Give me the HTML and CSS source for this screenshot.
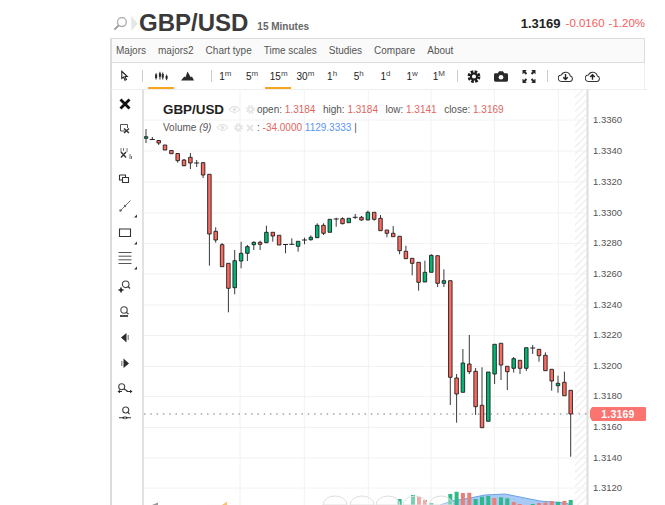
FILE: index.html
```html
<!DOCTYPE html>
<html lang="en">
<head>
<meta charset="utf-8">
<title>GBP/USD 15 Minutes</title>
<link rel="stylesheet" href="styles.css">
</head>
<body>
<div class="page">
  <header class="quote">
    <svg class="search" viewBox="0 0 16 16"><circle cx="9.5" cy="6.5" r="4.7"/><path class="search-handle" d="M6 10l-4.5 4.5"/></svg>
    <svg class="chev" viewBox="0 0 7 16"><path d="M0 0l7 8-7 8z"/></svg>
    <h1 class="symbol">GBP/USD</h1>
    <span class="period">15 Minutes</span>
    <span class="last">1.3169</span>
    <span class="delta">-0.0160</span>
    <span class="delta delta-pct">-1.20%</span>
  </header>

  <div class="widget">
    <nav class="menu">
      <span class="menu-item">Majors</span>
      <span class="menu-item">majors2</span>
      <span class="menu-item">Chart type</span>
      <span class="menu-item">Time scales</span>
      <span class="menu-item">Studies</span>
      <span class="menu-item">Compare</span>
      <span class="menu-item">About</span>
    </nav>

    <div class="tools">
      <button class="tool tool-cursor"><svg viewBox="0 0 14 16"><path class="cur" d="M2.5 1.5v10l2.500-2 2 4.500 2-1-2-4.300h3.200z"/></svg></button>
      <i class="sep"></i>
      <button class="tool tool-type active"><svg class="ico-candle" viewBox="0 0 20 14"><path class="ln" d="M3 3v9M8.500 1v11M12.500 2v10M18 5v8"/><path class="solid" d="M1.500 5h3v5h-3zM7 3h3v5H7zM11 4h3v5h-3zM16.500 7h3v4h-3z"/></svg></button>
      <button class="tool tool-type"><svg class="ico-mount" viewBox="0 0 16 12"><path class="solid" d="M0 11.500l4-5 1.500 1L8 .5l4 7 1.500-1 2.500 5z"/></svg></button>
      <i class="sep sep-b"></i>
      <span class="tf">1<sup>m</sup></span>
      <span class="tf">5<sup>m</sup></span>
      <span class="tf active">15<sup>m</sup></span>
      <span class="tf">30<sup>m</sup></span>
      <span class="tf">1<sup>h</sup></span>
      <span class="tf">5<sup>h</sup></span>
      <span class="tf">1<sup>d</sup></span>
      <span class="tf">1<sup>w</sup></span>
      <span class="tf">1<sup>M</sup></span>
      <i class="sep sep-c"></i>
      <button class="tool tool-act"><svg viewBox="0 0 14 14"><circle class="gear-teeth" cx="7" cy="7" r="5.400"/><circle class="gear-ring" cx="7" cy="7" r="3.300"/></svg></button>
      <button class="tool tool-act"><svg viewBox="0 0 15 12"><path class="solid" d="M1.500 2.500h2.500L5.500.5h4L11 2.500h2.500q1.500 0 1.500 1.500v6q0 1.500-1.500 1.500h-12Q0 11.500 0 10V4q0-1.500 1.500-1.500z"/><circle class="lens" cx="7.500" cy="6.800" r="2.500"/></svg></button>
      <button class="tool tool-act"><svg viewBox="0 0 14 14"><path class="solid" d="M0 0h4.500L3.300 1.700 5 3.500 3.500 5 1.700 3.300 0 4.500zM14 0v4.500L12.300 3.300 10.500 5 9 3.500l1.700-1.800L9.500 0zM0 14V9.500l1.700 1.200L3.500 9 5 10.500l-1.700 1.800L4.500 14zM14 14H9.500l1.200-1.700L9 10.500 10.500 9l1.800 1.700L14 9.500z"/></svg></button>
      <i class="sep sep-d"></i>
      <button class="tool tool-cloud"><svg viewBox="0 0 16 13"><path class="ol" d="M3.800 11.800h8.700a3 3 0 0 0 .6-5.900A5 5 0 0 0 3.600 5 3.400 3.400 0 0 0 3.800 11.800z"/><path class="arrow" d="M8 3.800v5.400M5.600 7.400L8 9.800l2.400-2.400"/></svg></button>
      <button class="tool tool-cloud"><svg viewBox="0 0 16 13"><path class="ol" d="M3.800 11.800h8.700a3 3 0 0 0 .6-5.900A5 5 0 0 0 3.600 5 3.400 3.400 0 0 0 3.800 11.800z"/><path class="arrow" d="M8 10V4.600M5.600 7L8 4.600 10.400 7"/></svg></button>
    </div>

    <div class="stage">
      <aside class="side">
        <svg viewBox="0 0 16 16"><path class="x-thick" d="M3.500 3.500l9 9M12.500 3.500l-9 9"/></svg>
        <svg viewBox="0 0 16 16"><path class="thin" d="M9 10H3.500V3.500h7V7"/><path class="x-small" d="M7 7.500l5 4.500M12 7.500l-5 4.500"/></svg>
        <svg viewBox="0 0 16 16"><path class="thin-g" d="M4 3v4M6.500 3v3M10 3v4M13 9v5M14.500 11v3"/><path class="x-small" d="M4 7l5 5.500M9 7l-5 5.500"/></svg>
        <svg viewBox="0 0 16 16"><path class="thin-b" d="M2.500 5h6v2M2.500 5v5H5M5.500 7.500h6v5h-6z"/></svg>
        <svg viewBox="0 0 16 16"><path class="thin-g" d="M3 13L13.500 2.500"/><circle class="dot" cx="3.500" cy="12.500" r="1.200"/><circle class="dot" cx="8" cy="8" r="1.200"/><path class="corner" d="M17 19.500l3-3v3z"/></svg>
        <svg viewBox="0 0 16 16"><path class="thin-b" d="M2.500 4h11v7.500h-11z"/><path class="corner" d="M17 19.500l3-3v3z"/></svg>
        <svg viewBox="0 0 16 16"><path class="thin" d="M1.500 2.500h13M1.500 6.200h13M1.500 9.800h13M1.500 13.500h13"/><path class="corner" d="M17 19.500l3-3v3z"/></svg>
        <svg viewBox="0 0 16 16"><circle class="lens-o" cx="8.700" cy="7.300" r="3.300"/><path class="thin-b" d="M11 9.500l2 2"/><path class="plus" d="M1.500 13h5M4 10.500v5"/></svg>
        <svg viewBox="0 0 16 16"><circle class="lens-o" cx="7" cy="6" r="3.200"/><path class="thin-b" d="M9.500 8.500l2 1.500"/><path class="plus" d="M3 12h8"/></svg>
        <svg viewBox="0 0 16 16"><path class="solid" d="M4 8.500L9.500 4v9.500z"/><path class="soft" d="M10.500 6H12v5h-1.500z"/></svg>
        <svg viewBox="0 0 16 16"><path class="soft" d="M4 6h1.500v5H4z"/><path class="solid" d="M6.500 3.500V13L12 8.500z"/></svg>
        <svg viewBox="0 0 16 16"><circle class="lens-o" cx="4.700" cy="5.700" r="3"/><path class="thin-b" d="M7 8l3.500 2M1.500 10.500H5M9.500 10.500h4"/><path class="solid" d="M3 8.800v3.500L.5 10.500zM13 8.800v3.500l2.500-1.800z"/></svg>
        <svg viewBox="0 0 16 16"><circle class="lens-o" cx="8.700" cy="4" r="3"/><path class="thin-b" d="M10.800 6.200l1.700 2M2 11.700h4M10 11.700h4"/><path class="solid" d="M7.500 9.900v3.500L5 11.700zM8.500 9.900v3.500l2.500-1.700z"/></svg>
      </aside>

      <div class="plot">
        <svg class="chart" viewBox="144 89 503 416" role="img" aria-label="GBP/USD candlestick chart">
          <defs>
            <pattern id="hatch" width="5" height="5" patternUnits="userSpaceOnUse" patternTransform="rotate(45)">
              <rect class="hatch-line" width="1.200" height="5"/>
            </pattern>
          </defs>
          <rect class="hatch" x="575" y="89" width="12" height="416"/>
          <path class="grid" d="M144 120H587M144 151H587M144 182H587M144 213H587M144 243.500H587M144 274H587M144 305H587M144 335.500H587M144 366.500H587M144 396.500H587M144 427.500H587M144 458H587M144 488H587M240 89V505M304.300 89V505M368.300 89V505M431 89V505M494.300 89V505M558.300 89V505"/>
          <path class="axis-line" d="M587.500 89V505"/>

          <path class="vol-area" d="M440 505L452 501L470 498L485 495L505 494L520 497L540 501L565 503L572 505Z"/>
          <path class="vol-line" d="M440 505L452 501L470 498L485 495L505 494L520 497L540 501L565 503L572 505"/>
          <path class="vol-up" d="M397.600 499h4v6h-4zM411 495h4v10h-4zM429.300 503h4v2h-4zM448.300 494h4v11h-4zM454.600 491.700h4v13.300h-4zM473.600 499h4v6h-4zM480 496.700h4v8.300h-4zM486.300 496h4v9h-4zM499 497.300h4v7.700h-4zM505.300 498.300h4v6.700h-4zM530.700 504h4v1h-4zM556 501.700h4v3.300h-4zM568.700 500h4v5h-4z"/>
          <path class="vol-down" d="M417 497h4v8h-4zM423 500h4v5h-4zM460.900 493h4v12h-4zM467.300 492.700h4v12.300h-4zM492.300 498h4v7h-4zM511.700 502h4v3h-4zM517.700 504h4v1h-4zM537 503h4v2h-4zM543.400 502.500h4v2.500h-4zM549.700 501h4v4h-4zM562.400 501h4v4h-4z"/>

          <path class="bubble" d="M347 505a12 9 0 0 0-24 0zM374 505a12 9 0 0 0-24 0zM400 505a12 9 0 0 0-24 0zM427 505a12 9 0 0 0-24 0zM453 505a12 9 0 0 0-24 0z"/>
          <path class="mark-g" d="M152 505l6-2.500V505z"/>
          <path class="mark-o" d="M222 505l5-3.500V505z"/>

          <path class="wick" d="M146 129V143M152.300 137V140M158.700 140V145M177.700 153V162.700M184 159V166.300M190.400 153V169M196.700 160V167M203.100 162V178M209.400 234V265.700M215.700 227.300V242.700M222.100 243V267M228.400 288V312.300M234.700 250V294.300M241.100 241.700V268.300M247.400 245V261M253.800 241.300V250M260.100 240.700V250M266.400 225.700V243M272.800 236V241.700M285.500 244.300V253.300M291.800 238.300V245M298.100 241.300V251.700M304.500 237.700V244.300M310.800 235.300V240.700M317.200 223.300V238M323.500 223.300V235M336.200 217.700V226.700M342.500 217.300V224.300M355.200 214V219M361.500 216V220.700M367.900 210.700V212M374.200 219V220.700M380.500 215V218M386.900 233V237.300M393.200 226V233M399.600 250V254.300M405.900 245.700V251M412.200 263V275.300M418.600 282V290.700M424.900 260.700V272M431.300 254.300V256M437.600 283V287M443.900 269.300V287M450.300 377V405M456.600 374V422.700M462.900 349V363M469.300 335V374M475.600 368V415M482 367.300V405M494.600 374V384M501 365V380M507.300 371.700V390M513.700 357V372.700M520 368V374M526.300 368V371M532.700 345V354M539 355.700V361.700M545.400 352.300V355M551.700 381V390.700M558 375.700V392.700M564.400 371.700V382M570.700 414V456.700"/>
          <path class="dash" d="M149.800 139.500h5M194.200 163h5M283 244.500h5M289.300 244.300h5M302 240h5M333.700 219h5M352.700 217.300h5M530.200 348h5"/>
          <path class="body-down" d="M156.950 140.500h3.500V143h-3.500zM163.250 145h3.500V150h-3.500zM169.650 150.500h3.500V153.700h-3.500zM175.950 153.500h3.500V160.700h-3.500zM182.250 160h3.500V165.700h-3.500zM188.650 157.300h3.500V163h-3.500zM201.350 162.700h3.500V175h-3.500zM207.650 174.300h3.500V234h-3.500zM213.950 231.300h3.500V240h-3.500zM220.350 244.700h3.500V266.700h-3.500zM226.650 263.300h3.500V288.300h-3.500zM258.350 242.300h3.500V244.300h-3.500zM271.050 232.300h3.500V236h-3.500zM277.350 235.300h3.500V245h-3.500zM321.750 225.300h3.500V233.300h-3.500zM340.750 218.700h3.500V223.700h-3.500zM359.750 217.300h3.500V220h-3.500zM372.450 212.300h3.500V219.300h-3.500zM378.750 218.300h3.500V230.700h-3.500zM385.150 230h3.500V233.300h-3.500zM391.450 233.300h3.500V236.700h-3.500zM397.850 236.300h3.500V250.700h-3.500zM404.150 251.300h3.500V258.700h-3.500zM410.450 258.300h3.500V263.300h-3.500zM416.850 262.300h3.500V282.300h-3.500zM435.850 255.700h3.500V283.300h-3.500zM448.550 280.700h3.500V377.300h-3.500zM454.850 378h3.500V394h-3.500zM467.550 364h3.500V371.700h-3.500zM473.850 371.300h3.500V406.700h-3.500zM480.250 405.300h3.500V427.700h-3.500zM499.250 343.300h3.500V365h-3.500zM505.550 366.300h3.500V371.700h-3.500zM518.250 360.300h3.500V368.300h-3.500zM537.250 349.300h3.500V355.700h-3.500zM543.650 355.300h3.500V370.700h-3.500zM549.950 369.300h3.500V381h-3.500zM562.650 382.300h3.500V395.700h-3.500zM568.950 390.300h3.500V414h-3.500z"/>
          <path class="body-up" d="M144.250 136.700h3.500V138.300h-3.500zM232.950 260.700h3.500V287.700h-3.500zM239.350 253.300h3.500V261h-3.500zM245.650 246.700h3.500V253.300h-3.500zM252.050 242.300h3.500V244.700h-3.500zM264.650 232.300h3.500V242.700h-3.500zM296.350 241.300h3.500V246.300h-3.500zM309.050 237.300h3.500V239.700h-3.500zM315.450 225.300h3.500V237.700h-3.500zM328.050 219.300h3.500V232.300h-3.500zM347.050 218.300h3.500V222.700h-3.500zM366.150 212.300h3.500V220h-3.500zM423.150 272.300h3.500V282h-3.500zM429.550 255.300h3.500V272.300h-3.500zM442.150 280.700h3.500V283.300h-3.500zM461.150 363h3.500V392.300h-3.500zM486.550 372h3.500V421.300h-3.500zM492.850 344.300h3.500V374h-3.500zM511.950 358.700h3.500V368.300h-3.500zM524.550 347.700h3.500V368.300h-3.500zM556.250 383.300h3.500V385.700h-3.500z"/>

          <path class="price-line" d="M144 414H590"/>

          <g class="axis-text">
            <text x="593" y="123">1.3360</text>
            <text x="593" y="154">1.3340</text>
            <text x="593" y="184.500">1.3320</text>
            <text x="593" y="215.500">1.3300</text>
            <text x="593" y="246">1.3280</text>
            <text x="593" y="277">1.3260</text>
            <text x="593" y="307.500">1.3240</text>
            <text x="593" y="338">1.3220</text>
            <text x="593" y="369">1.3200</text>
            <text x="593" y="399">1.3180</text>
            <text x="593" y="430">1.3160</text>
            <text x="593" y="461">1.3140</text>
            <text x="593" y="491">1.3120</text>
          </g>
          <path class="tag" d="M590 410.500l2-3.500h53q1 0 1 1v12q0 1-1 1h-53l-2-4z"/>
          <text class="tag-text" x="618" y="417.800">1.3169</text>
        </svg>

        <div class="legend">
          <div class="legend-row legend-main">
            <b class="legend-symbol">GBP/USD</b>
            <svg class="mini eye" viewBox="0 0 14 10"><path d="M1 5q6-7 12 0-6 7-12 0z"/><circle cx="7" cy="5" r="2"/></svg>
            <svg class="mini gear" viewBox="0 0 10 10"><circle class="g-teeth" cx="5" cy="5" r="3.900"/><circle class="g-ring" cx="5" cy="5" r="2.300"/></svg>
            <span class="ohlc">open: <em>1.3184</em></span>
            <span class="ohlc">high: <em>1.3184</em></span>
            <span class="ohlc">low: <em>1.3141</em></span>
            <span class="ohlc">close: <em>1.3169</em></span>
          </div>
          <div class="legend-row legend-vol">
            <span class="vol-name">Volume <i>(9)</i></span>
            <svg class="mini eye" viewBox="0 0 14 10"><path d="M1 5q6-7 12 0-6 7-12 0z"/><circle cx="7" cy="5" r="2"/></svg>
            <svg class="mini gear" viewBox="0 0 10 10"><circle class="g-teeth" cx="5" cy="5" r="3.900"/><circle class="g-ring" cx="5" cy="5" r="2.300"/></svg>
            <svg class="mini close" viewBox="0 0 8 8"><path d="M1 1l6 6M7 1L1 7"/></svg>
            <span class="vol-vals">: <em>-34.0000</em> <u>1129.3333</u> |</span>
          </div>
        </div>
      </div>
    </div>
  </div>
</div>
</body>
</html>
```
FILE: styles.css
```css
* { box-sizing: border-box; }
html, body { margin: 0; padding: 0; background: #fff; }
body { font-family: "Liberation Sans", Arial, sans-serif; color: #333; }
.page { width: 665px; height: 505px; overflow: hidden; }
svg { display: block; }

/* quote header */
.quote { height: 38px; padding: 8px 0 0 113px; display: flex; align-items: center; }
.search { width: 15px; height: 15px; flex: none; }
.search circle { fill: none; stroke: #aaa; stroke-width: 1.4; }
.search-handle { fill: none; stroke: #999; stroke-width: 2; }
.chev { width: 7px; height: 15px; margin-left: 3px; flex: none; }
.chev path { fill: #e6e6e6; }
.symbol { margin: 0 0 0 1px; font-size: 24px; line-height: 28px; font-weight: 700; color: #3a3a3a; }
.period { margin: 6px 0 0 9px; font-size: 10px; font-weight: 700; color: #666; }
.last { margin-left: auto; font-size: 13px; font-weight: 700; color: #222; }
.delta { margin-left: 5px; font-size: 11.500px; color: #f45d5d; }
.delta-pct { margin-left: 4px; margin-right: 20px; }

/* widget */
.widget { width: 537px; margin-left: 110px; }
.menu { width: 535px; height: 25px; display: flex; align-items: center; background: #fafafa; border: 1px solid #dcdcdc; border-left-width: 2px; }
.menu-item { padding: 0 6px; font-size: 10px; color: #555; }
.menu-item:first-child { padding-left: 4px; }

.tools { width: 535px; height: 26px; display: flex; align-items: center; border-left: 2px solid #dcdcdc; border-right: 1px solid #eee; }
.tool { display: flex; align-items: center; justify-content: center; padding: 0; border: 0; background: none; height: 24px; position: relative; }
.tool-cursor { width: 14px; margin-left: 6px; }
.tool-cursor svg { width: 10px; height: 14px; }
.tool-type { width: 26px; }
.ico-candle { width: 14px; height: 10px; }
.ico-mount { width: 13px; height: 10px; }
.tool-act { width: 27.500px; }
.tool-act svg { width: 14px; height: 13px; }
.tool-cloud { width: 27px; }
.tool-cloud svg { width: 15px; height: 13px; }
.active::after { content: ""; position: absolute; left: 0; right: 0; bottom: -1px; height: 2.500px; background: #f7a61f; }

.sep { flex: none; width: 1px; height: 12px; background: #ccc; margin-left: 10px; margin-right: 5px; }
.sep-b { margin-left: 11px; margin-right: 0; }
.sep-c { margin-left: 5px; margin-right: 2px; }
.sep-d { margin-left: 4px; margin-right: 4px; }

.tf { flex: none; width: 26.700px; height: 24px; line-height: 26px; text-align: center; font-size: 10px; color: #222; position: relative; }
.tf sup { font-size: 8px; line-height: 0; vertical-align: 4px; color: #444; }
.tf.active::after { left: 0; right: 1px; }

.cur { fill: #fff; stroke: #222; stroke-width: 1.500; }
.ol { fill: #fff; stroke: #333; stroke-width: 1.100; }
.ln { fill: none; stroke: #222; stroke-width: 1.400; }
.solid { fill: #2a2a2a; }
.soft { fill: #999; }
.lens { fill: #fff; }
.gear-teeth { fill: none; stroke: #1c1c1c; stroke-width: 3; stroke-dasharray: 2.800 1.440; }
.gear-ring { fill: none; stroke: #1c1c1c; stroke-width: 2.200; }
.arrow { fill: none; stroke: #222; stroke-width: 1.500; }

/* chart stage */
.stage { display: flex; height: 416px; }
.side { width: 34px; flex: none; padding: 1.500px 4px 0 0; display: grid; grid-template-rows: 25px 24px 24px 27.500px 28px 25px 26.500px 27.500px 25.500px 25.500px 26px 25.500px 25px; align-content: start; justify-items: center; align-items: center; border-left: 2px solid #dcdcdc; border-right: 2px solid #e2e2e2; border-top: 1px solid #eee; }
.side svg { width: 16px; height: 16px; overflow: visible; }
.x-thick { fill: none; stroke: #111; stroke-width: 2.800; }
.thin { fill: none; stroke: #555; stroke-width: 1; }
.thin-g { fill: none; stroke: #777; stroke-width: 1; }
.thin-b { fill: none; stroke: #333; stroke-width: 1.100; }
.x-small { fill: none; stroke: #333; stroke-width: 1.400; }
.dot { fill: #666; }
.corner { fill: #333; }
.lens-o { fill: none; stroke: #444; stroke-width: 1.100; }
.plus { fill: none; stroke: #222; stroke-width: 1.600; }

.plot { position: relative; width: 503px; flex: none; border-top: 1px solid #eee; }
.chart { width: 503px; height: 416px; margin-top: -1px; }

.grid { stroke: #f2f2f2; stroke-width: 1; fill: none; }
.hatch { fill: url(#hatch); }
.hatch-line { fill: #ececec; }
.axis-line { stroke: #dedede; stroke-width: 2; fill: none; }
.wick { stroke: #3a3a3a; stroke-width: 1; fill: none; }
.dash { stroke: #222; stroke-width: 1; fill: none; }
.body-down { fill: #ff6a60; stroke: #1e1e1e; stroke-width: .9; }
.body-up { fill: #00b873; stroke: #1e1e1e; stroke-width: .9; }
.price-line { stroke: #777; stroke-width: 1; stroke-dasharray: 1.500 4.800; fill: none; }
.axis-text text { font-size: 9.500px; fill: #555; }
.tag { fill: #fb7470; }
.tag-text { font-size: 10.500px; font-weight: 700; fill: #fff; text-anchor: middle; letter-spacing: .2px; }
.vol-area { fill: #a9c9f5; }
.vol-line { fill: none; stroke: #6aa4e8; stroke-width: 1; }
.vol-up { fill: #2fb98a; }
.vol-down { fill: #e8807a; }
.bubble { fill: #fff; stroke: #dedede; stroke-width: 1; fill-opacity: .35; }
.mark-g { fill: #999; }
.mark-o { fill: #fbc36a; }

/* legend */
.legend { position: absolute; left: 19px; top: 11px; font-size: 10px; color: #555; }
.legend-row { display: flex; align-items: center; white-space: nowrap; }
.legend-main { height: 16px; }
.legend-vol { height: 15px; margin-top: 3px; }
.legend-symbol { font-size: 13.400px; color: #222; width: 65px; }
.ohlc { margin-right: 7.500px; }
.ohlc em, .vol-vals em { font-style: normal; color: #e0665f; }
.vol-vals u { text-decoration: none; color: #5a97ee; }
.vol-name { width: 53px; }
.vol-name i { font-style: italic; }
.mini { flex: none; }
.eye { width: 13px; height: 9px; margin-right: 5px; }
.eye path { fill: none; stroke: #e3e3e3; stroke-width: 1.200; }
.eye circle { fill: #e3e3e3; }
.gear { width: 9px; height: 9px; margin-right: 2px; }
.g-teeth { fill: none; stroke: #e3e3e3; stroke-width: 2; stroke-dasharray: 1.800 1.260; }
.g-ring { fill: none; stroke: #e3e3e3; stroke-width: 1.500; }
.close { width: 8px; height: 8px; margin: 0 3px 0 1px; }
.close path { fill: none; stroke: #e3e3e3; stroke-width: 1.800; }
.vol-vals { white-space: pre; }
```
